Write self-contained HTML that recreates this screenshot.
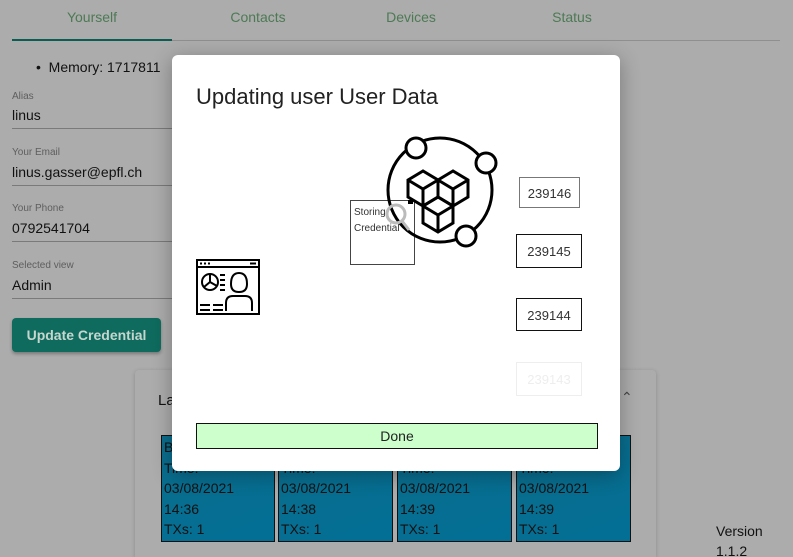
<!DOCTYPE html>
<html><head><style>
*{margin:0;padding:0;box-sizing:border-box}
html,body{width:793px;height:557px;overflow:hidden}
body{background:#acacac;font-family:"Liberation Sans",sans-serif;position:relative;color:#111}
.abs{position:absolute}
.tab{position:absolute;top:9px;font-size:14px;color:#4d7a55;width:160px;text-align:center}
.lbl{position:absolute;left:12px;font-size:10px;color:#5e5e5e}
.val{position:absolute;left:12px;font-size:14px;color:#111}
.line{position:absolute;left:12px;width:170px;height:1px;background:#7a7a7a}
.blk{position:absolute;top:435px;height:107px;background:linear-gradient(160deg,#0b6d8c,#036f95);border:1px solid #111;font-size:14px;line-height:20.5px;padding:1px 2px;color:#111}
.num{position:absolute;background:#fff;border:1px solid #333;font-size:13px;text-align:center;color:#333}
</style></head><body>
<div class="tab" style="left:12px">Yourself</div>
<div class="tab" style="left:178px">Contacts</div>
<div class="tab" style="left:331px">Devices</div>
<div class="tab" style="left:492px">Status</div>
<div class="abs" style="left:12px;top:40px;width:768px;height:1px;background:#8f8f8f"></div>
<div class="abs" style="left:12px;top:39px;width:160px;height:2px;background:#0b5c52"></div>
<div class="abs" style="left:36px;top:59px;font-size:14px">• &nbsp;Memory: 1717811</div>
<div class="lbl" style="top:91px">Alias</div><div class="val" style="top:107px">linus</div><div class="line" style="top:128px"></div>
<div class="lbl" style="top:147px">Your Email</div><div class="val" style="top:164px">linus.gasser@epfl.ch</div><div class="line" style="top:185px"></div>
<div class="lbl" style="top:203px">Your Phone</div><div class="val" style="top:220px">0792541704</div><div class="line" style="top:241px"></div>
<div class="lbl" style="top:260px">Selected view</div><div class="val" style="top:277px">Admin</div><div class="line" style="top:298px"></div>
<div class="abs" style="left:12px;top:318px;width:149px;height:34px;background:#0e6b5e;border-radius:4px;color:#c6d6cf;font-size:14px;font-weight:bold;text-align:center;line-height:34px;box-shadow:0 2px 3px rgba(0,0,0,.3)">Update Credential</div>
<div class="abs" style="left:135px;top:370px;width:521px;height:187px;background:#acacac;border-radius:4px 4px 0 0;box-shadow:0 1px 4px rgba(0,0,0,.2)"></div>
<div class="abs" style="left:158px;top:392px;font-size:15px">La</div>
<div class="abs" style="left:621px;top:389px;font-size:14px;color:#444">&#8963;</div>
<div class="blk" style="left:161px;width:114px">B<br>Time:<br>03/08/2021<br>14:36<br>TXs: 1</div>
<div class="blk" style="left:278px;width:115px">B<br>Time:<br>03/08/2021<br>14:38<br>TXs: 1</div>
<div class="blk" style="left:397px;width:115px">B<br>Time:<br>03/08/2021<br>14:39<br>TXs: 1</div>
<div class="blk" style="left:516px;width:115px">B<br>Time:<br>03/08/2021<br>14:39<br>TXs: 1</div>
<div class="abs" style="left:716px;top:521px;font-size:14px;line-height:20px">Version<br>1.1.2</div>

<div class="abs" style="left:172px;top:55px;width:448px;height:416px;background:#fff;border-radius:6px;box-shadow:0 4px 20px rgba(0,0,0,.3)">
 <div class="abs" style="left:24px;top:29px;font-size:22px;color:#222">Updating user User Data</div>
 <div class="abs" style="left:178px;top:145px;width:65px;height:65px;border:1px solid #444;font-size:10px;line-height:16px;padding:4px 3px;color:#333">Storing Credential</div>
 <svg class="abs" style="left:200px;top:75px" width="140" height="120" viewBox="0 0 140 120">
  <g fill="none" stroke="#000" stroke-width="3">
   <circle cx="68" cy="60" r="52"/>
   <circle cx="44" cy="18" r="10" fill="#fff"/><circle cx="114" cy="33" r="10" fill="#fff"/><circle cx="94" cy="106" r="10" fill="#fff"/>
   <path d="M36 50 L51 41 L66 50 L66 67 L51 76 L36 67 Z M36 50 L51 59 L66 50 M51 59 L51 76"/>
   <path d="M66 50 L81 41 L96 50 L96 67 L81 76 L66 67 M66 50 L81 59 L96 50 M81 59 L81 76"/>
   <path d="M51 76 L66 67 L81 76 L81 93 L66 102 L51 93 Z M51 76 L66 85 L81 76 M66 85 L66 102"/>
  </g>
  <rect x="36" y="70" width="5" height="4" fill="#000"/>
  <g fill="none" stroke="#bbb" stroke-width="3"><circle cx="24" cy="84" r="9"/><path d="M30 91 L37 100"/></g>
 </svg>
 <svg class="abs" style="left:24px;top:204px" width="64" height="56" viewBox="0 0 64 56">
  <g fill="none" stroke="#000" stroke-width="2">
   <rect x="1" y="1" width="62" height="54"/><path d="M1 8 H63"/>
   <path d="M4 4.5h2M8 4.5h2M12 4.5h2M54 4.5h6"/>
   <circle cx="14" cy="23" r="8"/><path d="M14 15V23L21 27M14 23L8 28"/>
   <path d="M24 16h5M24 21h5M24 26h5M24 31h5"/>
   <path d="M35 25 Q35 14 43 14 Q51 14 51 25 Q51 33 43 33 Q35 33 35 25Z"/>
   <path d="M30 52 V44 Q30 37 37 37 H49 Q56 37 56 44 V52"/>
   <path d="M4 46h10M17 46h10M4 51h10M17 51h10"/>
  </g>
 </svg>
 <div class="num" style="left:347px;top:122px;width:61px;height:31px;line-height:31px;border-color:#777">239146</div>
 <div class="num" style="left:344px;top:179px;width:66px;height:34px;line-height:34px;border-color:#111">239145</div>
 <div class="num" style="left:344px;top:243px;width:66px;height:33px;line-height:33px;border-color:#111">239144</div>
 <div class="num" style="left:344px;top:307px;width:66px;height:34px;line-height:34px;border-color:#eee;color:#eee">239143</div>
 <div class="abs" style="left:24px;top:368px;width:402px;height:26px;background:#cfc;border:1px solid #111;text-align:center;line-height:24px;font-size:14px;color:#222">Done</div>
</div>
</body></html>
